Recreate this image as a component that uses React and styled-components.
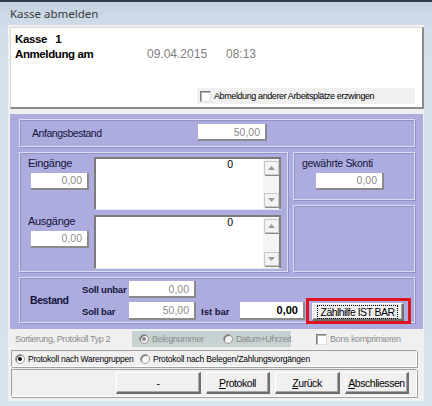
import React from "react";
import styled, { createGlobalStyle } from "styled-components";

const SANS = `"Liberation Sans", Arial, sans-serif`;

const Global = createGlobalStyle`
  * { box-sizing: border-box; }
  html, body { margin: 0; padding: 0; background: #cdd9e6; }
  body { font-family: ${SANS}; font-size: 11px; color: #000; }
`;

const Window = styled.div`
  width: 432px;
  height: 406px;
  display: flex;
  flex-direction: column;
  background: linear-gradient(180deg, #c4d2e1 0px, #d3dfeb 30px, #d6e2ee 100%);
  border-top: 2px solid #2c3a50;
  overflow: hidden;
`;

const TitleBar = styled.div`
  height: 23px;
  display: flex;
  align-items: center;
  padding-left: 10px;
  font-family: "Noto Sans", "Open Sans", sans-serif;
  font-size: 11.5px;
  color: #3b3b3b;
`;

const Client = styled.div`
  margin: 0 8px;
  height: 376px;
  background: #f0f0f0;
  padding: 2px 2px 0 2px;
  display: flex;
  flex-direction: column;
`;

const HeaderPanel = styled.div`
  height: 82px;
  width: 414px;
  background: #fff;
  border-left: 1px solid #d8d8d8;
  border-top: 1px solid #d8d8d8;
  border-right: 2px solid #8c8c8c;
  border-bottom: 2px solid #8c8c8c;
  padding: 3px 0 0 4px;
  display: flex;
  flex-direction: column;
`;

const HeadRow = styled.div`
  display: flex;
  align-items: center;
  height: 15px;
`;

const HeadLabel = styled.span`
  font-weight: bold;
  font-size: 11.5px;
  letter-spacing: -0.4px;
  width: 132px;
  white-space: pre;
`;

const HeadValue = styled.span`
  font-size: 12px;
  color: #808080;
  width: ${(p) => p.w || 80}px;
`;

const ForceRow = styled.div`
  margin-top: auto;
  margin-bottom: 3px;
  margin-left: 182px;
  width: 218px;
  height: 16px;
  background: #f0f0f0;
  display: flex;
  align-items: center;
  padding-left: 3px;
  gap: 3px;
  font-size: 9px;
  letter-spacing: -0.4px;
`;

const CheckBox = styled.span`
  width: 11px;
  height: 11px;
  background: #fff;
  border-top: 1px solid #808080;
  border-left: 1px solid #808080;
  border-right: 1px solid #e0e0e0;
  border-bottom: 1px solid #e0e0e0;
  box-shadow: inset 1px 1px 0 #b0b0b0;
  flex: none;
`;

const Purple = styled.div`
  margin-top: 5px;
  width: 413px;
  height: 215px;
  background: #acacdf;
  padding: 5px 8px 6px 9px;
  display: flex;
  flex-direction: column;
  gap: 5px;
`;

const Group = styled.div`
  border: 1px solid #dcdcf2;
  box-shadow: inset 1px 1px 0 #9292c4, 1px 1px 0 #9292c4;
  display: flex;
  height: ${(p) => p.h}px;
  width: ${(p) => (p.w ? p.w + "px" : "auto")};
`;

const AnfangsGroup = styled(Group)`
  align-items: center;
  padding-left: 12px;
`;

const Label = styled.span`
  color: #14143a;
  font-size: ${(p) => p.fs || 10.5}px;
  letter-spacing: ${(p) => p.ls ?? -0.35}px;
  white-space: nowrap;
  width: ${(p) => (p.w ? p.w + "px" : "auto")};
  font-weight: ${(p) => (p.bold ? "bold" : "normal")};
`;

const NumBox = styled.div`
  width: ${(p) => p.w}px;
  height: ${(p) => p.h || 17}px;
  margin: ${(p) => p.m || 0};
  background: #fff;
  border-right: 2px solid #8a8a8a;
  border-bottom: 2px solid #8a8a8a;
  display: flex;
  align-items: center;
  justify-content: flex-end;
  padding-right: 5px;
  font-size: ${(p) => (p.bold ? 11 : 10.5)}px;
  color: ${(p) => (p.bold ? "#000" : "#8c8c8c")};
  font-weight: ${(p) => (p.bold ? "bold" : "normal")};
  flex: none;
`;

const MidRow = styled.div`
  display: flex;
  gap: 5px;
  height: 120px;
`;

const RightCol = styled.div`
  display: flex;
  flex-direction: column;
  gap: 5px;
  width: 122px;
`;

const FlowGroup = styled(Group)`
  flex-direction: column;
  padding: ${(p) => p.pad};
`;

const IOGrid = styled.div`
  display: grid;
  grid-template-columns: 66px 187px;
  grid-template-rows: 54px 54px;
  row-gap: 4px;
`;

const IOLabelCell = styled.div`
  display: flex;
  flex-direction: column;
  gap: 4px;
`;

const MemoBox = styled.div`
  background: #fff;
  border-top: 2px solid #7c7c7c;
  border-left: 2px solid #7c7c7c;
  border-bottom: 1px solid #e8e8e8;
  display: flex;
  height: ${(p) => p.h}px;
`;

const MemoText = styled.div`
  flex: 1;
  text-align: right;
  padding: 0 30px 0 0;
  line-height: 11px;
  font-size: 10.5px;
`;

const ScrollBar = styled.div`
  width: 18px;
  display: flex;
  flex-direction: column;
  justify-content: space-between;
  align-items: center;
  padding: 2px 0;
  background: #f4f4f4;
  border-right: 2px solid #7c7c7c;
`;

const ScrollBtn = styled.div`
  width: 15px;
  height: 14px;
  background: #f3f3f3;
  border: 1px solid #c8c8c8;
  box-shadow: 1px 1px 0 #8a8a8a;
  display: flex;
  align-items: center;
  justify-content: center;
`;

const Arrow = ({ down }) => (
  <svg width="7" height="4" viewBox="0 0 7 4">
    <path d={down ? "M0 0H7L3.5 4Z" : "M0 4H7L3.5 0Z"} fill="#9a9a9a" />
  </svg>
);

const BestandGroup = styled(Group)`
  align-items: center;
  padding-left: 10px;
`;

const BestandGrid = styled.div`
  display: grid;
  grid-template-columns: 47px 67px 5px 39px 65px 1px auto;
  grid-template-rows: 17px 18px;
  row-gap: 4px;
  align-items: center;
  padding-top: 2px;
`;

const RedFrame = styled.div`
  grid-column: 7;
  grid-row: 2;
  height: 26px;
  align-self: center;
  border: 3px solid #e0141e;
  padding: 2px 4px 0 3px;
  display: flex;
`;

const Button = styled.button`
  font-family: ${SANS};
  font-size: 10.5px;
  letter-spacing: -0.45px;
  color: #000;
  background: #f0f0f0;
  border-top: 1px solid #fff;
  border-left: 1px solid #fff;
  border-right: 2px solid #6e6e6e;
  border-bottom: 2px solid #6e6e6e;
  box-shadow: inset -1px -1px 0 #a8a8a8;
  width: ${(p) => p.w}px;
  height: ${(p) => p.h}px;
  padding: 0;
  margin: 0;
  display: flex;
  align-items: center;
  justify-content: center;
  cursor: default;
`;

const FocusText = styled.span`
  border: 1px dotted #000;
  padding: 0 3px;
  line-height: 12px;
  white-space: nowrap;
  letter-spacing: -0.55px;
`;

const Under = styled.span`
  text-decoration: underline;
`;

const SortRow = styled.div`
  height: 16px;
  margin-top: 2px;
  display: flex;
  align-items: center;
  padding-left: 5px;
`;

const GrayText = styled.span`
  color: #8c8c8c;
  font-size: 9px;
  letter-spacing: -0.4px;
  width: ${(p) => (p.w ? p.w + "px" : "auto")};
  white-space: nowrap;
`;

const DisabledBox = styled.div`
  width: 159px;
  height: 16px;
  background: #c6d2d2;
  display: flex;
  align-items: center;
  padding-left: 7px;
`;

const RadioItem = styled.span`
  display: flex;
  align-items: center;
  gap: 3px;
  width: ${(p) => (p.w ? p.w + "px" : "auto")};
  white-space: nowrap;
  font-size: ${(p) => p.fs || 9}px;
  letter-spacing: ${(p) => p.ls ?? -0.4}px;
  color: ${(p) => (p.disabled ? "#8c8c8c" : "#000")};
`;

const RadioDot = styled.span`
  width: 10px;
  height: 10px;
  border-radius: 50%;
  background: ${(p) => (p.disabled ? "#f0f0f0" : "#fff")};
  border: 1px solid #9a9a9a;
  box-shadow: inset 1px 1px 0 #6a6a6a;
  display: flex;
  align-items: center;
  justify-content: center;
  flex: none;
  &::after {
    content: "";
    display: ${(p) => (p.checked ? "block" : "none")};
    width: 4px;
    height: 4px;
    border-radius: 50%;
    background: ${(p) => (p.disabled ? "#8c8c8c" : "#000")};
  }
`;

const CheckGray = styled.span`
  display: flex;
  align-items: center;
  gap: 3px;
  margin-left: 25px;
`;

const SunkenRow = styled.div`
  width: 406px;
  height: ${(p) => p.h}px;
  margin: ${(p) => p.m};
  border-top: 1px solid #a0a0a0;
  border-left: 1px solid #a0a0a0;
  border-right: 1px solid #fff;
  border-bottom: 1px solid #fff;
  box-shadow: 1px 1px 0 #a0a0a0;
  display: flex;
  align-items: center;
  padding: ${(p) => p.pad};
  gap: ${(p) => p.gap || 0}px;
`;

export default function App() {
  return (
    <>
      <Global />
      <Window>
        <TitleBar>Kasse abmelden</TitleBar>
        <Client>
          <HeaderPanel>
            <HeadRow>
              <HeadLabel>{"Kasse   1"}</HeadLabel>
            </HeadRow>
            <HeadRow>
              <HeadLabel>Anmeldung am</HeadLabel>
              <HeadValue w={79}>09.04.2015</HeadValue>
              <HeadValue>08:13</HeadValue>
            </HeadRow>
            <ForceRow>
              <CheckBox />
              <span>Abmeldung anderer Arbeitsplätze erzwingen</span>
            </ForceRow>
          </HeaderPanel>

          <Purple>
            <AnfangsGroup h={28}>
              <Label w={166} ls={-0.45}>Anfangsbestand</Label>
              <NumBox w={69}>50,00</NumBox>
            </AnfangsGroup>

            <MidRow>
              <FlowGroup w={269} h={120} pad="4px 0 0 8px">
                <IOGrid>
                  <IOLabelCell>
                    <Label fs={11} ls={-0.3}>Eingänge</Label>
                    <NumBox w={58} m="0 0 0 3px">0,00</NumBox>
                  </IOLabelCell>
                  <MemoBox h={53}>
                    <MemoText>0</MemoText>
                    <ScrollBar>
                      <ScrollBtn><Arrow /></ScrollBtn>
                      <ScrollBtn><Arrow down /></ScrollBtn>
                    </ScrollBar>
                  </MemoBox>
                  <IOLabelCell>
                    <Label fs={11} ls={-0.3}>Ausgänge</Label>
                    <NumBox w={58} m="0 0 0 3px">0,00</NumBox>
                  </IOLabelCell>
                  <MemoBox h={54}>
                    <MemoText>0</MemoText>
                    <ScrollBar>
                      <ScrollBtn><Arrow /></ScrollBtn>
                      <ScrollBtn><Arrow down /></ScrollBtn>
                    </ScrollBar>
                  </MemoBox>
                </IOGrid>
              </FlowGroup>
              <RightCol>
                <FlowGroup h={48} pad="4px 0 0 8px">
                  <Label fs={10.5} ls={-0.3}>gewährte Skonti</Label>
                  <NumBox w={68} m="4px 0 0 14px">0,00</NumBox>
                </FlowGroup>
                <Group h={67} />
              </RightCol>
            </MidRow>

            <BestandGroup h={47}>
              <Label bold fs={10.5} ls={-0.4} w={52}>Bestand</Label>
              <BestandGrid>
                <Label bold fs={9.5} ls={-0.2}>Soll unbar</Label>
                <NumBox w={67}>0,00</NumBox>
                <span />
                <span />
                <span />
                <span />
                <span />
                <Label bold fs={9.5} ls={-0.2}>Soll bar</Label>
                <NumBox w={67} h={18}>50,00</NumBox>
                <span />
                <Label bold fs={9.5} ls={0}>Ist bar</Label>
                <NumBox w={65} h={18} bold>0,00</NumBox>
                <span />
                <RedFrame>
                  <Button w={92} h={18}>
                    <FocusText>Zählhilfe IST BAR</FocusText>
                  </Button>
                </RedFrame>
              </BestandGrid>
            </BestandGroup>
          </Purple>

          <SortRow>
            <GrayText w={117}>Sortierung, Protokoll Typ 2</GrayText>
            <DisabledBox>
              <RadioItem w={85} disabled>
                <RadioDot checked disabled />
                Belegnummer
              </RadioItem>
              <RadioItem disabled>
                <RadioDot disabled />
                Datum+Uhrzeit
              </RadioItem>
            </DisabledBox>
            <CheckGray>
              <CheckBox />
              <GrayText>Bons komprimieren</GrayText>
            </CheckGray>
          </SortRow>

          <SunkenRow h={17} m="3px 0 0 1px" pad="0 0 0 3px">
            <RadioItem w={125} fs={8.5} ls={-0.25}>
              <RadioDot checked />
              Protokoll nach Warengruppen
            </RadioItem>
            <RadioItem fs={8.5} ls={-0.2}>
              <RadioDot />
              Protokoll nach Belegen/Zahlungsvorgängen
            </RadioItem>
          </SunkenRow>

          <SunkenRow h={28} m="2px 0 0 1px" pad="0 0 0 104px" gap={5}>
            <Button w={85} h={22}>-</Button>
            <Button w={64} h={22}><span><Under>P</Under>rotokoll</span></Button>
            <Button w={65} h={22}><span><Under>Z</Under>urück</span></Button>
            <Button w={64} h={22}><span><Under>A</Under>bschliessen</span></Button>
          </SunkenRow>
        </Client>
      </Window>
    </>
  );
}
